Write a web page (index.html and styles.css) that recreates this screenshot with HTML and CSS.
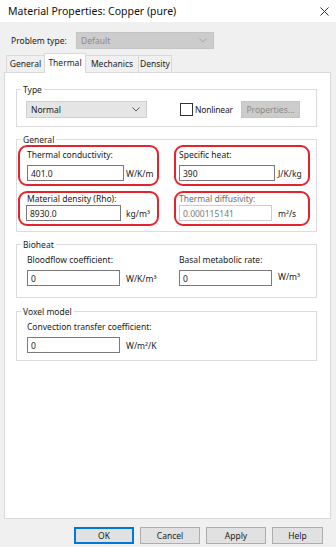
FILE: index.html
```html
<!DOCTYPE html>
<html>
<head>
<meta charset="utf-8">
<link rel="stylesheet" href="styles.css">
</head>
<body>
<div class="window">
  <div class="titlebar">
    <span class="title">Material Properties: Copper (pure)</span>
    <svg class="close" width="9" height="9" viewBox="0 0 9 9"><path d="M0.5 0.5 L8.5 8.5 M8.5 0.5 L0.5 8.5" stroke="#333" stroke-width="1" fill="none"/></svg>
  </div>

  <div class="problem">
    <span class="problem-label">Problem type:</span>
    <div class="combo combo-disabled">
      <span>Default</span>
      <svg class="chev" width="8" height="5" viewBox="0 0 8 5"><path d="M0.5 0.5 L4 4 L7.5 0.5" stroke="#a8a8a8" fill="none"/></svg>
    </div>
  </div>

  <div class="tabs">
    <div class="tab tab-general">General</div>
    <div class="tab tab-active">Thermal</div>
    <div class="tab tab-mech">Mechanics</div>
    <div class="tab tab-density">Density</div>
  </div>

  <div class="panel">
    <fieldset class="group group-type">
      <legend>Type</legend>
      <div class="type-row">
        <div class="combo combo-normal">
          <span>Normal</span>
          <svg class="chev" width="8" height="5" viewBox="0 0 8 5"><path d="M0.5 0.5 L4 4 L7.5 0.5" stroke="#606060" fill="none"/></svg>
        </div>
        <label class="check"><span class="box"></span><span>Nonlinear</span></label>
        <div class="btn btn-disabled">Properties...</div>
      </div>
    </fieldset>

    <fieldset class="group group-general">
      <legend>General</legend>
      <div class="annot-grid">
        <div class="annot annot-left">
          <div class="flabel">Thermal conductivity:</div>
          <div class="irow"><div class="input w97">401.0</div><span class="unit">W/K/m</span></div>
        </div>
        <div class="annot annot-right">
          <div class="flabel">Specific heat:</div>
          <div class="irow"><div class="input w96">390</div><span class="unit u3">J/K/kg</span></div>
        </div>
        <div class="annot annot-left annot-row2">
          <div class="flabel">Material density (Rho):</div>
          <div class="irow"><div class="input w95 shift">8930.0</div><span class="unit u5">kg/m³</span></div>
        </div>
        <div class="annot annot-right annot-row2">
          <div class="flabel flabel-dis">Thermal diffusivity:</div>
          <div class="irow"><div class="input input-dis w93">0.000115141</div><span class="unit u6">m²/s</span></div>
        </div>
      </div>
    </fieldset>

    <fieldset class="group group-bio">
      <legend>Bioheat</legend>
      <div class="fgrid">
        <div class="field">
          <div class="flabel2">Bloodflow coefficient:</div>
          <div class="irow"><div class="input w93">0</div><span class="unit u6">W/K/m³</span></div>
        </div>
        <div class="field">
          <div class="flabel2">Basal metabolic rate:</div>
          <div class="irow irow-top"><div class="input w93">0</div><span class="unit u6 unit-high">W/m³</span></div>
        </div>
      </div>
    </fieldset>

    <fieldset class="group group-voxel">
      <legend>Voxel model</legend>
      <div class="field">
        <div class="flabel2">Convection transfer coefficient:</div>
        <div class="irow"><div class="input w93">0</div><span class="unit u6">W/m²/K</span></div>
      </div>
    </fieldset>
  </div>

  <div class="buttons">
    <div class="btn btn-default">OK</div>
    <div class="btn">Cancel</div>
    <div class="btn">Apply</div>
    <div class="btn btn-help">Help</div>
  </div>
</div>
</body>
</html>
```

FILE: styles.css
```css
* { box-sizing: border-box; }

html, body {
  margin: 0;
  padding: 0;
}

body {
  width: 336px;
  height: 547px;
  overflow: hidden;
  background: #f0f0f0;
  font-family: "Noto Sans", "Open Sans", sans-serif;
  font-size: 8.5px;
  color: #1a1a1a;
}

.window {
  width: 336px;
  height: 547px;
  display: flex;
  flex-direction: column;
}

.titlebar {
  height: 22px;
  background: #fff;
  display: flex;
  align-items: center;
  justify-content: space-between;
  padding: 0 7px 0 8px;
}

.title {
  font-size: 10.5px;
  color: #111;
}

.close { display: block; }

.problem {
  margin-top: 10px;
  height: 17px;
  display: flex;
  align-items: center;
  padding-left: 11px;
}

.problem-label {
  width: 65px;
}

.combo {
  height: 17px;
  display: flex;
  align-items: center;
  justify-content: space-between;
  padding: 0 6px 0 4px;
}

.combo-disabled {
  width: 138px;
  background: #cccccc;
  border: 1px solid #c4c4c4;
  color: #8a8a8a;
}

.combo-normal {
  width: 121px;
  background: #e5e5e5;
  border: 1px solid #d0d0d0;
  margin-left: -1px;
}

.chev { display: block; }

.tabs {
  margin-top: 4px;
  height: 20px;
  margin-bottom: -1px;
  display: flex;
  align-items: flex-end;
  padding-left: 6px;
}

.tab {
  height: 18px;
  border: 1px solid #d9d9d9;
  border-right: none;
  background: #f0f0f0;
  display: flex;
  align-items: center;
  justify-content: center;
  padding-bottom: 1px;
}

.tab-general { width: 38px; }
.tab-mech { width: 52px; border-left: none; }
.tab-density { width: 34px; border-right: 1px solid #d9d9d9; }

.tab-active {
  position: relative;
  z-index: 1;
  width: 42px;
  height: 20px;
  background: #fff;
  border: 1px solid #d9d9d9;
  border-bottom: none;
  padding-bottom: 3px;
}

.panel {
  margin: 0 5px 0 4px;
  height: 447px;
  background: #fff;
  border: 1px solid #d9d9d9;
  padding: 11px 0 0 11px;
}

.group {
  width: 301px;
  margin: 0 0 7px 0;
  border: 1px solid #dcdcdc;
  padding: 0 10px;
  min-width: 0;
}

.group legend {
  padding: 0 2px;
  margin-left: -6px;
  line-height: 11px;
  font-size: 8.5px;
}

.group-type { padding-top: 6px; padding-bottom: 8px; }
.group-general { padding-top: 0; padding-bottom: 5px; }
.group-bio { padding-top: 4px; padding-bottom: 11px; margin-bottom: 8px; }
.group-voxel { padding-top: 4px; padding-bottom: 7px; }

.type-row {
  display: flex;
  align-items: center;
  height: 17px;
}

.check {
  display: flex;
  align-items: center;
  margin-left: 33px;
  letter-spacing: -0.2px;
}

.box {
  width: 13px;
  height: 13px;
  border: 1px solid #333;
  background: #fff;
  margin-right: 2px;
}

.btn {
  height: 17px;
  width: 60px;
  background: #e1e1e1;
  border: 1px solid #adadad;
  display: flex;
  align-items: center;
  justify-content: center;
}

.btn-disabled {
  width: 59px;
  margin-left: auto;
  margin-right: 6px;
  background: #cccccc;
  border-color: #c4c4c4;
  color: #8a8a8a;
}

.annot-grid {
  margin-left: -9px;
  display: grid;
  grid-template-columns: 141px 136px;
  column-gap: 15px;
  row-gap: 5px;
}

.annot {
  border: 2px solid #e5232c;
  border-radius: 9px;
  padding: 2px 0 3px 7px;
}

.annot-right { padding-left: 3px; }
.annot-row2 { padding-top: 0; }

.flabel {
  line-height: 11px;
  margin-bottom: 5px;
  white-space: nowrap;
}

.annot-row2 .flabel { margin-bottom: 1px; }

.flabel-dis { color: #6d6d6d; }

.flabel2 {
  line-height: 12px;
  margin-bottom: 4px;
  white-space: nowrap;
}

.irow {
  display: flex;
  align-items: center;
}

.input {
  height: 16px;
  border: 1px solid #7a7a7a;
  background: #fff;
  padding-left: 3px;
  display: flex;
  align-items: center;
  white-space: nowrap;
}

.input-dis {
  border-color: #cccccc;
  color: #7a7a7a;
}

.shift { margin-left: -1px; }

.w97 { width: 97px; }
.w96 { width: 96px; }
.w95 { width: 95px; }
.w93 { width: 93px; }

.unit { margin-left: 2px; white-space: nowrap; }
.u3 { margin-left: 3px; }
.u5 { margin-left: 5px; }
.u6 { margin-left: 6px; }

.irow-top { align-items: flex-start; }
.unit-high { margin-top: 1px; }

.fgrid {
  display: grid;
  grid-template-columns: 152px 1fr;
}

.buttons {
  margin-top: 8px;
  display: flex;
  justify-content: flex-end;
  gap: 6px;
  padding-right: 13px;
}

.btn-default {
  border-color: #0078d7;
  box-shadow: inset 0 0 0 1px #0078d7;
}

.btn-help { width: 51px; }
```
